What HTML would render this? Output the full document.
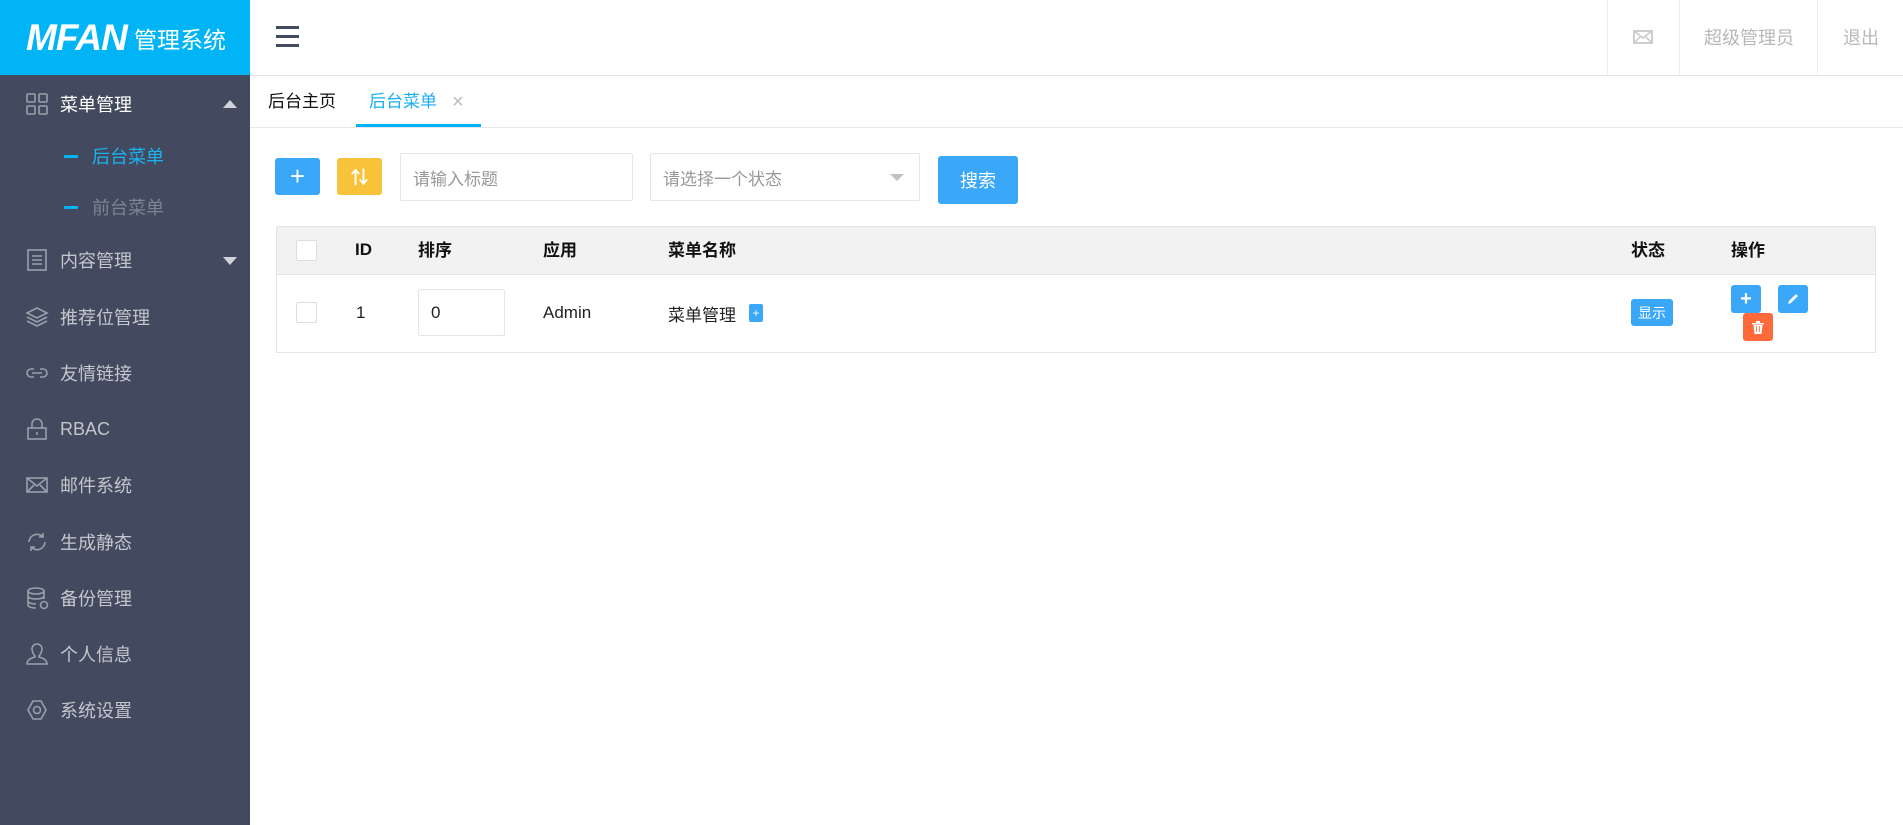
<!DOCTYPE html>
<html><head><meta charset="utf-8"><style>
*{margin:0;padding:0;box-sizing:border-box}
body{width:1903px;height:825px;overflow:hidden;background:#fff;font-family:"Liberation Sans","Noto Sans CJK SC",sans-serif;position:relative}
.abs{position:absolute}
#side{left:0;top:0;width:250px;height:825px;background:#434a5f}
#logo{left:0;top:0;width:250px;height:75px;background:#00b4f5;color:#fff}
.item{position:absolute;left:0;width:250px;height:56px;display:flex;align-items:center;color:#c3c6cd;font-size:18px}
.item svg{position:absolute;left:25px;width:24px;height:24px;fill:none;stroke:#9a9fab;stroke-width:1.6}
.item span{position:absolute;left:60px}
.sub{position:absolute;left:64px;font-size:18px;display:flex;align-items:center}
.sub i{display:inline-block;width:14px;height:3px;background:#00b4f5;margin-right:14px}
.th{position:absolute;top:236px;font-size:17px;font-weight:bold;color:#111}
.th.l{top:240px}
.td{position:absolute;font-size:17px;color:#222}
.btn{position:absolute;border-radius:3px;color:#fff;display:flex;align-items:center;justify-content:center}
.cb{position:absolute;width:21px;height:21px;border:1px solid #ddd;background:#fff;border-radius:2px}
</style></head><body>
<div id="side" class="abs"></div>
<div id="logo" class="abs">
<span class="abs" style="left:26px;top:17px;font-size:37px;font-weight:bold;font-style:italic;letter-spacing:-1px">MFAN</span>
<span class="abs" style="left:134px;top:21px;font-size:23px">管理系统</span>
</div>
<div class="item" style="top:76px;color:#fff">
<svg viewBox="0 0 24 24"><rect x="2" y="2" width="8" height="8" rx="1"/><rect x="14" y="2" width="8" height="8" rx="1"/><rect x="2" y="14" width="8" height="8" rx="1"/><rect x="14" y="14" width="8" height="8" rx="1"/></svg>
<span>菜单管理</span>
<div class="abs" style="left:223px;top:24px;border-left:7px solid transparent;border-right:7px solid transparent;border-bottom:8px solid #d0d3d9"></div>
</div>
<div class="sub" style="top:143px;color:#19b3f0"><i></i>后台菜单</div>
<div class="sub" style="top:194px;color:#7d8393"><i></i>前台菜单</div>
<div class="item" style="top:232px">
<svg viewBox="0 0 24 24"><rect x="3" y="2" width="18" height="20"/><path d="M7 8h10M7 12h10M7 16h10"/></svg>
<span>内容管理</span>
<div class="abs" style="left:223px;top:25px;border-left:7px solid transparent;border-right:7px solid transparent;border-top:8px solid #d0d3d9"></div>
</div>
<div class="item" style="top:289px"><svg viewBox="0 0 24 24"><path d="M12 3L2 8l10 5 10-5z M2 12l10 5 10-5 M2 16l10 5 10-5"/></svg><span>推荐位管理</span></div>
<div class="item" style="top:345px"><svg viewBox="0 0 24 24"><path d="M9 8H6a4 4 0 000 8h3M15 8h3a4 4 0 010 8h-3M7 12h10"/></svg><span>友情链接</span></div>
<div class="item" style="top:401px"><svg viewBox="0 0 24 24"><rect x="3" y="11" width="18" height="11"/><path d="M7 11V7a5 5 0 0110 0v4M12 15v3"/></svg><span>RBAC</span></div>
<div class="item" style="top:457px"><svg viewBox="0 0 24 24"><rect x="2" y="5" width="20" height="14"/><path d="M2 5l10 8 10-8M2 19l7-7M22 19l-7-7"/></svg><span>邮件系统</span></div>
<div class="item" style="top:514px"><svg viewBox="0 0 24 24"><path d="M20 12a8 8 0 01-14 5M4 12a8 8 0 0114-5M18 3v4h-4M6 21v-4h4"/></svg><span>生成静态</span></div>
<div class="item" style="top:570px"><svg viewBox="0 0 24 24"><ellipse cx="11" cy="5" rx="8" ry="3"/><path d="M3 5v14c0 2 4 3 8 3M19 5v8M3 10c0 2 4 3 8 3s8-1 8-3M3 15c0 2 4 3 8 3"/><circle cx="19" cy="19" r="3.5"/></svg><span>备份管理</span></div>
<div class="item" style="top:626px"><svg viewBox="0 0 24 24"><path d="M12 2a5 5 0 00-5 5c0 3 2 6 3 7v1c-4 1-8 3-8 7h20c0-4-4-6-8-7v-1c1-1 3-4 3-7a5 5 0 00-5-5z"/></svg><span>个人信息</span></div>
<div class="item" style="top:682px"><svg viewBox="0 0 24 24"><path d="M8 3h8l5 9-5 9H8l-5-9z"/><circle cx="12" cy="12" r="3.5"/></svg><span>系统设置</span></div>

<!-- header -->
<div class="abs" style="left:250px;top:75px;width:1653px;height:1px;background:#e6e6e6"></div>
<div class="abs" style="left:276px;top:26px;width:23px;height:3px;background:#444b5e;box-shadow:0 9px 0 #444b5e,0 18px 0 #444b5e"></div>
<div class="abs" style="left:1607px;top:0;width:1px;height:75px;background:#eee"></div>
<div class="abs" style="left:1679px;top:0;width:1px;height:75px;background:#eee"></div>
<div class="abs" style="left:1817px;top:0;width:1px;height:75px;background:#eee"></div>
<svg class="abs" style="left:1633px;top:30px" width="20" height="14" viewBox="0 0 20 14"><rect x="1" y="1" width="18" height="12" fill="none" stroke="#c8c8c8" stroke-width="1.8"/><path d="M1 1l9 7 9-7M1 13l6-6M19 13l-6-6" fill="none" stroke="#c8c8c8" stroke-width="1.5"/></svg>
<span class="abs" style="left:1704px;top:24px;font-size:18px;color:#b8b8b8">超级管理员</span>
<span class="abs" style="left:1843px;top:24px;font-size:18px;color:#b8b8b8">退出</span>

<!-- tabs -->
<div class="abs" style="left:250px;top:127px;width:1653px;height:1px;background:#e8e8e8"></div>
<span class="abs" style="left:268px;top:87px;font-size:17px;color:#111">后台主页</span>
<span class="abs" style="left:369px;top:87px;font-size:17px;color:#19aef0">后台菜单</span>
<span class="abs" style="left:452px;top:91px;font-size:20px;color:#bbb">×</span>
<div class="abs" style="left:356px;top:124px;width:125px;height:3px;background:#00b4f5"></div>

<!-- toolbar -->
<div class="btn" style="left:275px;top:158px;width:45px;height:37px;background:#3aa7f8;font-size:26px">+</div>
<div class="btn" style="left:337px;top:158px;width:45px;height:37px;background:#f8c23a;font-size:18px;font-weight:bold">⇅</div>
<div class="abs" style="left:400px;top:153px;width:233px;height:48px;border:1px solid #e6e6e6;border-radius:2px"></div>
<span class="abs" style="left:413px;top:165px;font-size:17px;color:#999">请输入标题</span>
<div class="abs" style="left:650px;top:153px;width:270px;height:48px;border:1px solid #e6e6e6;border-radius:2px"></div>
<span class="abs" style="left:663px;top:165px;font-size:17px;color:#999">请选择一个状态</span>
<div class="abs" style="left:890px;top:174px;border-left:7px solid transparent;border-right:7px solid transparent;border-top:7px solid #c2c2c2"></div>
<div class="btn" style="left:938px;top:156px;width:80px;height:48px;background:#3aa7f8;font-size:18px">搜索</div>

<!-- table -->
<div class="abs" style="left:276px;top:226px;width:1600px;height:127px;border:1px solid #e6e6e6"></div>
<div class="abs" style="left:277px;top:227px;width:1598px;height:48px;background:#f2f2f2;border-bottom:1px solid #e6e6e6"></div>
<div class="cb" style="left:296px;top:240px"></div>
<span class="th l" style="left:355px">ID</span>
<span class="th" style="left:418px">排序</span>
<span class="th" style="left:543px">应用</span>
<span class="th" style="left:668px">菜单名称</span>
<span class="th" style="left:1631px">状态</span>
<span class="th" style="left:1731px">操作</span>
<div class="cb" style="left:296px;top:302px"></div>
<span class="td" style="left:356px;top:303px">1</span>
<div class="abs" style="left:418px;top:289px;width:87px;height:47px;border:1px solid #e6e6e6;border-radius:2px"></div>
<span class="td" style="left:431px;top:303px">0</span>
<span class="td" style="left:543px;top:303px">Admin</span>
<span class="td" style="left:668px;top:301px">菜单管理</span>
<div class="btn" style="left:749px;top:304px;width:14px;height:18px;background:#3aa7f8;font-size:12px;border-radius:2px">+</div>
<div class="btn" style="left:1631px;top:299px;width:42px;height:27px;background:#3aa7f8;font-size:14px">显示</div>
<div class="btn" style="left:1731px;top:285px;width:30px;height:28px;background:#3aa7f8;font-size:20px;font-weight:bold">+</div>
<div class="btn" style="left:1778px;top:285px;width:30px;height:28px;background:#3aa7f8">
<svg width="12" height="12" viewBox="0 0 12 12"><path d="M1 11l1-3 7-7 2 2-7 7z" fill="#fff"/></svg></div>
<div class="btn" style="left:1743px;top:313px;width:30px;height:28px;background:#fe6a3a">
<svg width="12" height="13" viewBox="0 0 12 13"><path d="M0 2h12v1.5H0zM4 0h4v2H4zM1.5 4h9l-1 9h-7z" fill="#fff"/><path d="M4.5 5v6M7.5 5v6" stroke="#fe6a3a" stroke-width="0.8"/></svg></div>
</body></html>
